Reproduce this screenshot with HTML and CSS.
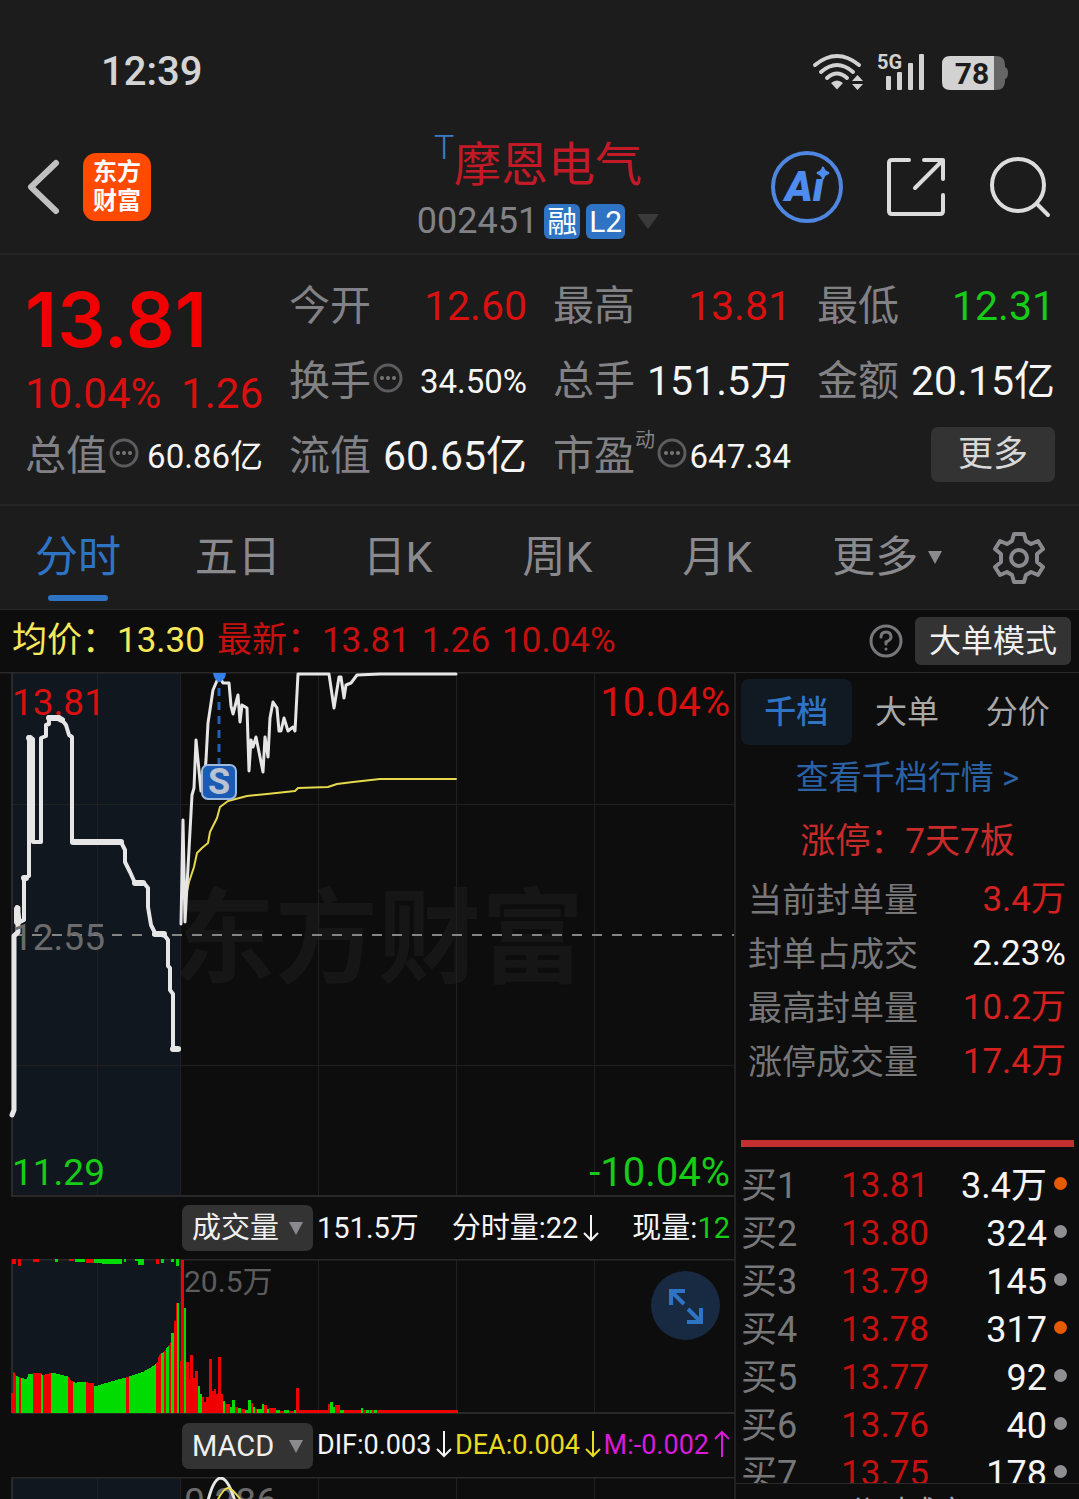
FILE: index.html
```html
<!DOCTYPE html>
<html lang="zh-CN">
<head>
    <meta charset="UTF-8">
    <meta name="viewport" content="width=device-width, initial-scale=1.0">
    <title>摩恩电气 002451</title>
    <link rel="stylesheet" href="styles.css">
</head>
<body>
<div class="screen">

    <!-- Status bar -->
    <div class="status">
        <span class="status__time">12:39</span>
        <svg class="status__icons" viewBox="812 42 196 60" width="196" height="60">
            <g fill="none" stroke="#d2d2d2" stroke-width="4" stroke-linecap="round">
                <path d="M815 65 Q837 47 859 65"/>
                <path d="M821 72 Q837 58 853 72"/>
                <path d="M827 78 Q837 69 847 78"/>
            </g>
            <g fill="#d2d2d2">
                <path d="M831 83 Q837 78 843 83 L837 89.500 Z"/>
                <path d="M852 81 L857.500 75 L863 81 Z M852 84 H863 L857.500 90 Z"/>
                <rect x="886" y="76" width="5" height="14" rx="1"/>
                <rect x="897" y="72" width="5" height="18" rx="1"/>
                <rect x="908" y="63" width="5" height="27" rx="1"/>
                <rect x="919" y="54" width="5" height="36" rx="1"/>
                <text class="status__net" x="877" y="69">5G</text>
            </g>
            <path d="M990 56 H996 Q1005 56 1005 65 V67 Q1008 68 1008 73 Q1008 78 1005 79 V81 Q1005 90 996 90 H990 Z" fill="#666"/>
            <path d="M950 56 H994 V90 H950 Q942 90 942 82 V64 Q942 56 950 56 Z" fill="#d2d2d2"/>
            <text class="status__battery" x="972" y="84" text-anchor="middle">78</text>
        </svg>
    </div>

    <!-- Title bar -->
    <header class="header">
        <div class="header__left">
            <button class="icon-btn" aria-label="返回">
                <svg width="36" height="56" viewBox="0 0 36 56"><path d="M31 4 L6 28 L31 52" fill="none" stroke="#c0c0c0" stroke-width="6" stroke-linecap="round" stroke-linejoin="round"/></svg>
            </button>
            <a href="#" class="header__logo">东方<br>财富</a>
        </div>
        <div class="header__title">
            <h1 class="header__name"><sup class="header__mark">T</sup>摩恩电气</h1>
            <div class="header__code">
                <span>002451</span>
                <span class="tag">融</span>
                <span class="tag">L2</span>
                <svg width="22" height="15" viewBox="0 0 22 15"><path d="M0 0 H22 L11 15 Z" fill="#3a3a3a"/></svg>
            </div>
        </div>
        <div class="header__right">
            <button class="icon-btn" aria-label="Ai">
                <svg width="72" height="72" viewBox="772 152 72 72">
                    <circle cx="808" cy="188" r="34" fill="none" stroke="#4f86e0" stroke-width="4"/>
                    <text class="header__ai" x="786" y="202">Ai</text>
                    <rect x="815" y="165" width="16" height="15" fill="#1c1c1c"/>
                    <path d="M824 168 Q825 173 830 174 Q825 175 824 180 Q823 175 818 174 Q823 173 824 168 Z" fill="#4f8cf0" stroke="#4f8cf0" stroke-width="2"/>
                </svg>
            </button>
            <button class="icon-btn" aria-label="分享">
                <svg width="60" height="60" viewBox="886 158 60 60" fill="none" stroke="#dcdcdc" stroke-width="4" stroke-linecap="round" stroke-linejoin="round">
                    <path d="M909 161 H892 Q889 161 889 164 V212 Q889 215 892 215 H940 Q943 215 943 212 V196"/>
                    <path d="M924 161 H943 V180 M942 162 L915 189"/>
                </svg>
            </button>
            <button class="icon-btn" aria-label="搜索">
                <svg width="62" height="62" viewBox="989 156 62 62" fill="none" stroke="#dcdcdc" stroke-width="4" stroke-linecap="round">
                    <circle cx="1018" cy="185" r="26"/>
                    <path d="M1037 204 L1048 215"/>
                </svg>
            </button>
        </div>
    </header>

    <!-- Quote -->
    <section class="quote">
        <div class="quote__price">
            <strong class="quote__last">13.81</strong>
            <div class="quote__change"><span>10.04%</span><span>1.26</span></div>
        </div>
        <div class="quote__item"><span class="quote__label">今开</span><span class="quote__value up">12.60</span></div>
        <div class="quote__item"><span class="quote__label">最高</span><span class="quote__value up">13.81</span></div>
        <div class="quote__item"><span class="quote__label">最低</span><span class="quote__value down">12.31</span></div>
        <div class="quote__item">
            <span class="quote__label">换手<svg class="dots" viewBox="0 0 30 30"><use href="#dots"/></svg></span>
            <span class="quote__value quote__value--small">34.50%</span>
        </div>
        <div class="quote__item"><span class="quote__label">总手</span><span class="quote__value">151.5万</span></div>
        <div class="quote__item"><span class="quote__label">金额</span><span class="quote__value">20.15亿</span></div>
        <div class="quote__item">
            <span class="quote__label">总值<svg class="dots" viewBox="0 0 30 30"><use href="#dots"/></svg></span>
            <span class="quote__value quote__value--small">60.86亿</span>
        </div>
        <div class="quote__item"><span class="quote__label">流值</span><span class="quote__value">60.65亿</span></div>
        <div class="quote__item">
            <span class="quote__label">市盈<small class="quote__note">动</small><svg class="dots" viewBox="0 0 30 30"><use href="#dots"/></svg></span>
            <span class="quote__value quote__value--small">647.34</span>
        </div>
        <div class="quote__item quote__item--end"><button class="quote__more">更多</button></div>
    </section>

    <svg class="defs" width="0" height="0">
        <symbol id="dots" viewBox="0 0 30 30">
            <circle cx="15" cy="15" r="13" fill="none" stroke="#5c5c5e" stroke-width="3"/>
            <g fill="#77777a"><circle cx="9" cy="15" r="2"/><circle cx="15" cy="15" r="2"/><circle cx="21" cy="15" r="2"/></g>
        </symbol>
    </svg>

    <!-- Period tabs -->
    <nav class="tabs">
        <a href="#" class="tabs__link tabs__link--active">分时</a>
        <a href="#" class="tabs__link">五日</a>
        <a href="#" class="tabs__link">日K</a>
        <a href="#" class="tabs__link">周K</a>
        <a href="#" class="tabs__link">月K</a>
        <a href="#" class="tabs__link tabs__link--more">更多<svg width="14" height="13" viewBox="0 0 14 13"><path d="M0 0 H14 L7 13 Z" fill="#8a8a8e"/></svg></a>
        <button class="icon-btn" aria-label="设置">
            <svg width="54" height="54" viewBox="-27 -27 54 54" fill="none" stroke="#8a8a8e" stroke-width="4" stroke-linejoin="round">
                <path d="M-5 -24 H5 L7 -17 L12 -14 L19 -17 L24 -9 L18 -4 V4 L24 9 L19 17 L12 14 L7 17 L5 24 H-5 L-7 17 L-12 14 L-19 17 L-24 9 L-18 4 V-4 L-24 -9 L-19 -17 L-12 -14 L-7 -17 Z"/>
                <circle r="8"/>
            </svg>
        </button>
    </nav>

    <!-- Average / latest -->
    <div class="info">
        <span class="info__avg">均价：13.30</span>
        <span class="info__last">最新：13.81</span>
        <span class="info__last">1.26</span>
        <span class="info__last">10.04%</span>
        <button class="icon-btn info__help" aria-label="帮助">
            <svg width="34" height="34" viewBox="0 0 34 34" fill="none" stroke="#77777a" stroke-width="3" stroke-linecap="round">
                <circle cx="17" cy="17" r="15"/>
                <path d="M12 13 Q12 8 17 8 Q22 8 22 13 Q22 16 17 18 V20 M17 25 V25.100"/>
            </svg>
        </button>
        <button class="info__mode">大单模式</button>
    </div>

    <main class="market">
        <!-- Charts -->
        <div class="charts">
            <svg class="chart" viewBox="0 672 734 525">
                <rect x="12" y="673" width="169" height="523" fill="#10171f"/>
                <text class="chart__watermark" x="172" y="975">东方财富</text>
                <g class="chart__grid">
                    <path d="M97.500 673 V1196 M180.500 673 V1196 M318.500 673 V1196 M456.500 673 V1196 M594.500 673 V1196"/>
                    <path d="M12 804.500 H734 M12 1065.500 H734"/>
                </g>
                <path class="chart__frame" d="M0 672.500 H734 M12 672 V1196 H734"/>
                <path d="M12 935 H734" stroke="#858585" stroke-width="2" stroke-dasharray="10 10"/>
                <path class="line" stroke-width="5" d="M12 1115 L14 1110 V936 L18 932 V908"/>
                <path class="line" stroke-width="4" d="M17 907 L20 922 L24 920 V878 L29 876 V737 L33 739 V842 H41 V738 L46 736 V725 L49 724 V717 H59 L62 720 L66 725 L69 735 L72 737 V842 H121 L125 850 V862 L130 872 L135 883 H144 L148 888 V907 L151 925 L155 933 L165 936 L168 940 V966 L170 968 V990 L173 994 V1049 H179"/>
                <path class="line" stroke-width="6" d="M49 718 H58 L62 720 M73 842 H121 M135 883 H143 M155 934 H164 M173 1049 H178 M29 738 H30 M24 878 H26 M17 909 V922"/>
                <path class="line line--avg" d="M185 900 L189 882 L194 867 L197 853 L202 848 L208 843 L210 832 L217 818 L220 807 L228 801 L247 796 L267 794 L295 791 L298 788 L328 787 L337 784 L353 782 L380 779 L456 779"/>
                <path class="line" stroke-width="3" d="M181 924 L183 820 L185 922 L192 795 L194 788 L196 740 L201 791 L204 782 L206 760 L208 723 L213 690 L219 676 L223 683 L229 683 L231 706 L233 714 L238 695 L240 722 L242 705 L247 708 L249 771 L251 740 L253 747 L256 737 L263 772 L265 737 L268 757 L270 718 L273 702 L277 708 L279 731 H281 L284 718 L288 731 L293 727 L295 731 L298 674 H329 L334 708 L339 677 H341 L344 698 L346 685 L351 683 L357 675 L380 674 H456"/>
                <path d="M219 674 V764" stroke="#2461b5" stroke-width="3" stroke-dasharray="8 6"/>
                <path d="M213 673 H226 Q225 681 219 682 Q214 680 213 673 Z" fill="#3580ea"/>
                <rect x="202" y="765" width="34" height="34" rx="6" fill="#1c5bb4" stroke="#9db9df" stroke-width="2"/>
                <text class="chart__trade" x="219" y="794" text-anchor="middle">S</text>
                <text class="chart__label up" x="12" y="715">13.81</text>
                <text class="chart__label chart__label--percent up" x="730" y="716" text-anchor="end">10.04%</text>
                <text class="chart__label chart__label--mid" x="12" y="950">12.55</text>
                <text class="chart__label down" x="12" y="1185">11.29</text>
                <text class="chart__label chart__label--percent down" x="730" y="1186" text-anchor="end">-10.04%</text>
            </svg>

            <div class="indicator">
                <label class="picker">
                    <select class="picker__select" aria-label="指标"><option>成交量</option></select>
                    <svg class="picker__caret" width="14" height="13" viewBox="0 0 14 13"><path d="M0 0 H14 L7 13 Z"/></svg>
                </label>
                <div class="indicator__values">
                    <span>151.5万</span>
                    <span>分时量:22<svg class="arrow" viewBox="0 0 16 30"><path d="M8 2 V27 M1 20 L8 27 L15 20"/></svg></span>
                    <span>现量:<span class="down">12</span></span>
                </div>
            </div>

            <div class="volume">
                <svg class="chart" viewBox="0 69 734 155">
                    <rect x="12" y="69" width="169" height="154" fill="#10171f"/>
                    <path class="chart__grid" d="M97.500 69 V223 M180.500 69 V223 M318.500 69 V223 M456.500 69 V223 M594.500 69 V223"/>
                    <path class="chart__frame" d="M12 223 V69.500 H734 M12 223 H734"/>
                    <g id="bars" transform="scale(0.3333)" shape-rendering="crispEdges"></g>
                    <text class="chart__small" x="184" y="102">20.5万</text>
                </svg>
                <button class="volume__expand" aria-label="全屏">
                    <svg width="36" height="36" viewBox="0 0 36 36" fill="none" stroke="#2f74c4" stroke-width="4"><path d="M3 17 V3 H17 M4 4 L16 16 M33 20 V34 H19 M32 33 L20 21"/></svg>
                </button>
            </div>

            <div class="indicator indicator--macd">
                <label class="picker">
                    <select class="picker__select" aria-label="指标"><option>MACD</option></select>
                    <svg class="picker__caret" width="14" height="13" viewBox="0 0 14 13"><path d="M0 0 H14 L7 13 Z"/></svg>
                </label>
                <div class="indicator__values">
                    <span>DIF:0.003<svg class="arrow" viewBox="0 0 16 30"><path d="M8 2 V27 M1 20 L8 27 L15 20"/></svg></span>
                    <span class="dea">DEA:0.004<svg class="arrow" viewBox="0 0 16 30"><path d="M8 2 V27 M1 20 L8 27 L15 20"/></svg></span>
                    <span class="macd">M:-0.002<svg class="arrow" viewBox="0 0 16 30"><path d="M8 28 V3 M1 10 L8 3 L15 10"/></svg></span>
                </div>
            </div>

            <svg class="chart" viewBox="0 1477 734 100">
                <rect x="12" y="1477" width="169" height="100" fill="#10171f"/>
                <path class="chart__grid" d="M97.500 1477 V1577 M180.500 1477 V1577 M318.500 1477 V1577 M456.500 1477 V1577 M594.500 1477 V1577"/>
                <path class="chart__frame" d="M12 1577 V1477.500 H734"/>
                <text class="chart__label chart__label--mid" x="184" y="1514">0.286</text>
                <path class="line" stroke-width="3" d="M207 1505 Q213 1478 221 1478 Q229 1479 236 1505"/>
                <path class="line line--avg" d="M214 1507 Q223 1488 228 1488 Q232 1488 240 1499"/>
            </svg>
        </div>

        <!-- Order book -->
        <aside class="depth">
            <nav class="depth__tabs">
                <a href="#" class="depth__tab depth__tab--active">千档</a>
                <a href="#" class="depth__tab">大单</a>
                <a href="#" class="depth__tab">分价</a>
            </nav>
            <a href="#" class="depth__link">查看千档行情 &gt;</a>
            <p class="depth__limit">涨停：7天7板</p>
            <dl class="stats">
                <div class="stats__row"><dt>当前封单量</dt><dd class="red">3.4万</dd></div>
                <div class="stats__row"><dt>封单占成交</dt><dd>2.23%</dd></div>
                <div class="stats__row"><dt>最高封单量</dt><dd class="red">10.2万</dd></div>
                <div class="stats__row"><dt>涨停成交量</dt><dd class="red">17.4万</dd></div>
            </dl>
            <div class="book">
                <table class="book__table">
                    <tr><th>买1</th><td class="book__price">13.81</td><td>3.4万</td><td class="book__dot book__dot--hot"></td></tr>
                    <tr><th>买2</th><td class="book__price">13.80</td><td>324</td><td class="book__dot"></td></tr>
                    <tr><th>买3</th><td class="book__price">13.79</td><td>145</td><td class="book__dot"></td></tr>
                    <tr><th>买4</th><td class="book__price">13.78</td><td>317</td><td class="book__dot book__dot--hot"></td></tr>
                    <tr><th>买5</th><td class="book__price">13.77</td><td>92</td><td class="book__dot"></td></tr>
                    <tr><th>买6</th><td class="book__price">13.76</td><td>40</td><td class="book__dot"></td></tr>
                    <tr><th>买7</th><td class="book__price">13.75</td><td>178</td><td class="book__dot"></td></tr>
                </table>
            </div>
            <div class="depth__deals">分时成交</div>
        </aside>
    </main>
</div>

<script>
    const RED = '#f00000';
    const GREEN = '#00dc00';
    const BASE = 670;
    const TOP = 207;
    const bars = document.getElementById('bars');

    function addBar(x, y, width, height, color) {
        const rect = document.createElementNS('http://www.w3.org/2000/svg', 'rect');
        rect.setAttribute('x', x);
        rect.setAttribute('y', y);
        rect.setAttribute('width', width);
        rect.setAttribute('height', height);
        rect.setAttribute('fill', color);
        bars.appendChild(rect);
    }

    // outline of the call auction volume: x, top
    const outline = [[33, 610], [38, 610], [40, 545], [48, 557], [60, 563], [80, 567], [85, 552], [120, 548],
        [128, 555], [150, 550], [165, 550], [205, 560], [213, 572], [225, 578], [250, 576], [281, 580],
        [284, 590], [330, 575], [380, 562], [430, 545], [464, 525], [472, 515], [476, 495], [487, 488],
        [497, 478], [505, 468], [512, 458], [514, 430], [521, 428], [522, 392], [528, 392], [529, 338], [537, 338]];
    // red stretches of the auction, the rest is green
    const redParts = [[33, 47], [55, 61], [99, 121], [129, 152], [204, 217], [257, 282], [378, 386],
        [468, 482], [490, 497], [505, 513], [521, 529]];

    function outlineAt(x) {
        let i = 1;
        while (i < outline.length - 1 && outline[i][0] < x) i++;
        const [x0, y0] = outline[i - 1];
        const [x1, y1] = outline[i];
        return y0 + (y1 - y0) * (x - x0) / (x1 - x0);
    }

    for (let x = 33; x < 537; x += 3) {
        const red = redParts.some(([a, b]) => x >= a && x < b);
        const y = outlineAt(x + 1);
        addBar(x, y, 3, BASE - y, red ? RED : GREEN);
    }

    // trading minutes: x, width, top, colour
    [[539, 6, 512, 'r'], [544, 8, 210, 'r'], [552, 7, 355, 'g'], [559, 7, 517, 'r'], [566, 5, 567, 'r'],
     [571, 9, 495, 'r'], [580, 6, 565, 'r'], [586, 7, 542, 'r'], [593, 7, 587, 'g'], [600, 7, 613, 'g'],
     [607, 6, 620, 'r'], [613, 6, 637, 'r'], [619, 7, 620, 'r'], [626, 9, 508, 'r'], [635, 6, 603, 'r'],
     [641, 7, 598, 'r'], [648, 6, 612, 'r'], [654, 9, 500, 'r'], [663, 6, 612, 'r'], [669, 7, 632, 'g'],
     [676, 14, 642, 'r'], [690, 6, 650, 'g'], [696, 8, 630, 'g'], [704, 10, 652, 'r'], [714, 8, 655, 'g'],
     [722, 14, 656, 'r'], [736, 8, 661, 'g'], [744, 8, 630, 'g'], [752, 7, 638, 'r'], [759, 6, 650, 'g'],
     [765, 6, 656, 'r'], [771, 14, 657, 'g'], [785, 8, 643, 'g'], [793, 8, 646, 'r'], [801, 6, 656, 'g'],
     [807, 20, 653, 'r'], [827, 12, 661, 'g'], [839, 14, 662, 'r'], [853, 14, 661, 'g'], [867, 14, 662, 'r'],
     [881, 7, 660, 'g'], [888, 10, 593, 'r'], [898, 87, 660, 'r'], [985, 6, 643, 'r'], [991, 9, 637, 'g'],
     [1000, 5, 652, 'g'], [1005, 15, 646, 'r'], [1020, 13, 660, 'g'], [1033, 49, 660, 'r'], [1082, 8, 655, 'g'],
     [1090, 8, 661, 'r'], [1098, 8, 659, 'g'], [1106, 4, 660, 'r'], [1110, 7, 660, 'g'], [1117, 6, 660, 'r'],
     [1123, 8, 660, 'g'], [1131, 242, 660, 'r']
    ].forEach(([x, w, y, c]) => addBar(x, y, w, BASE - y, c === 'r' ? RED : GREEN));

    // unmatched volume, hanging from the top
    [[35, 12, 222, 'r'], [55, 8, 228, 'r'], [100, 17, 215, 'r'], [165, 10, 215, 'g'], [208, 14, 212, 'r'],
     [225, 30, 215, 'g'], [257, 24, 219, 'r'], [281, 24, 219, 'g'], [305, 60, 223, 'g'], [371, 8, 217, 'g'],
     [405, 10, 213, 'g'], [415, 17, 226, 'g'], [468, 9, 223, 'r'], [484, 7, 219, 'g'], [514, 8, 215, 'g'],
     [528, 9, 228, 'g']
    ].forEach(([x, w, y, c]) => addBar(x, TOP, w, y - TOP, c === 'r' ? RED : GREEN));
</script>
</body>
</html>
```
FILE: styles.css
```css
* {
    box-sizing: border-box;
}

body {
    margin: 0;
    background-color: #0d0d0d;
    color: #f5f5f5;
    font-family: Roboto, "Noto Sans CJK SC", sans-serif;
    line-height: 1.2;
}

a {
    color: inherit;
    text-decoration: none;
}

button {
    border: none;
    padding: 0;
    color: inherit;
    font-family: inherit;
    line-height: inherit;
    cursor: pointer;
}

svg {
    display: block;
}

.screen {
    display: flex;
    flex-direction: column;
    height: 100vh;
    overflow: hidden;
}

.defs {
    position: absolute;
}

.icon-btn {
    display: flex;
    justify-content: center;
    align-items: center;
    background: none;
}

.up {
    color: #d9100f;
    fill: #d9100f;
}

.down {
    color: #16cc16;
    fill: #16cc16;
}

.red {
    color: #d4201f;
}

/* Status bar */
.status {
    display: flex;
    justify-content: space-between;
    align-items: center;
    flex: none;
    height: 121px;
    padding: 23px 71px 0 101px;
    background-color: #1c1c1c;
}

.status__time {
    font-size: 40px;
    font-weight: 500;
    color: #d4d4d4;
}

.status__net {
    font-size: 20px;
    font-weight: 700;
}

.status__battery {
    font-size: 30px;
    font-weight: 700;
    fill: #1c1c1c;
}

/* Title bar */
.header {
    display: grid;
    grid-template-columns: 1fr auto 1fr;
    align-items: center;
    flex: none;
    height: 134px;
    padding: 0 28px 0 25px;
    background-color: #1c1c1c;
    border-bottom: 2px solid #262626;
}

.header__left {
    display: flex;
    align-items: center;
    gap: 22px;
}

.header__logo {
    width: 68px;
    height: 68px;
    padding-top: 5px;
    border-radius: 13px;
    background-color: #ff4a00;
    color: #fff;
    font-size: 24px;
    font-weight: 700;
    line-height: 29px;
    text-align: center;
}

.header__title {
    padding-top: 11px;
    text-align: center;
}

.header__name {
    position: relative;
    display: inline-block;
    margin: 0;
    padding-left: 20px;
    color: #c21a26;
    font-size: 47px;
    font-weight: 400;
    line-height: 58px;
}

.header__mark {
    position: absolute;
    top: -18px;
    left: 0;
    color: #3a7cc8;
    font-size: 34px;
    font-weight: 300;
    line-height: 58px;
}

.header__code {
    display: flex;
    align-items: center;
    gap: 6px;
    height: 56px;
    color: #828286;
    font-size: 36px;
}

.header__code svg {
    margin-left: 6px;
}

.tag {
    padding: 0 3px;
    border-radius: 6px;
    background-color: #2f74c4;
    color: #fff;
    font-size: 30px;
    line-height: 35px;
}

.header__right {
    display: flex;
    justify-content: flex-end;
    align-items: center;
    gap: 43px;
}

.header__ai {
    fill: #4f8cf0;
    font-size: 42px;
    font-weight: 900;
    font-style: italic;
}

/* Quote */
.quote {
    display: grid;
    grid-template-columns: repeat(4, 1fr);
    grid-auto-rows: 75px;
    column-gap: 26px;
    flex: none;
    padding: 14px 24px 10px 25px;
    background-color: #1c1c1c;
    border-bottom: 2px solid #262626;
}

.quote__price {
    grid-row: span 2;
}

.quote__last {
    display: block;
    padding-top: 8px;
    color: #f00000;
    font-family: Inter, Roboto, sans-serif;
    font-size: 76px;
    font-weight: 600;
    line-height: 84px;
}

.quote__change {
    display: flex;
    justify-content: space-between;
    color: #d9100f;
    font-size: 42px;
    line-height: 66px;
}

.quote__item {
    display: flex;
    justify-content: space-between;
    align-items: center;
    white-space: nowrap;
}

.quote__item--end {
    justify-content: flex-end;
}

.quote__label {
    display: flex;
    align-items: center;
    color: #828286;
    font-size: 41px;
}

.quote__value {
    font-size: 41px;
}

.quote__value--small {
    font-size: 33px;
}

.quote__note {
    align-self: flex-start;
    font-size: 20px;
    line-height: 16px;
}

.dots {
    width: 30px;
    height: 30px;
    margin: 0 0 8px 2px;
}

.quote__more {
    width: 124px;
    height: 55px;
    margin-bottom: 4px;
    border-radius: 7px;
    background-color: #333;
    color: #d8d8d8;
    font-size: 35px;
}

/* Period tabs */
.tabs {
    display: grid;
    grid-template-columns: repeat(6, 4fr) 3fr;
    flex: none;
    height: 104px;
    background-color: #1c1c1c;
    border-bottom: 1px solid #262626;
}

.tabs__link {
    position: relative;
    display: flex;
    justify-content: center;
    align-items: center;
    gap: 10px;
    padding-right: 4px;
    color: #8a8a8e;
    font-size: 43px;
}

.tabs__link--active {
    color: #2f74c4;
}

.tabs__link--active::after {
    content: "";
    position: absolute;
    bottom: 8px;
    width: 60px;
    height: 6px;
    border-radius: 3px;
    background-color: #2f74c4;
}

.tabs__link--more {
    padding-left: 20px;
}

/* Average / latest */
.info {
    display: flex;
    align-items: center;
    gap: 12px;
    flex: none;
    height: 62px;
    padding: 0 8px 0 12px;
    font-size: 35px;
}

.info__avg {
    color: #f7e85a;
}

.info__last {
    color: #c5100f;
}

.info__help {
    margin-left: auto;
}

.info__mode {
    width: 156px;
    height: 48px;
    border-radius: 6px;
    background-color: #333;
    color: #f0f0f0;
    font-size: 32px;
}

/* Charts */
.market {
    display: grid;
    grid-template-columns: 734fr 345fr;
    flex: 1;
    min-height: 0;
}

.charts {
    min-width: 0;
    overflow: hidden;
}

.chart {
    width: 100%;
}

.chart__grid {
    fill: none;
    stroke: #1e2022;
    stroke-width: 1;
}

.chart__frame {
    fill: none;
    stroke: #292929;
    stroke-width: 2;
}

.chart__watermark {
    fill: #161616;
    font-size: 103px;
    font-weight: 700;
}

.chart__label {
    font-size: 37px;
}

.chart__label--percent {
    font-size: 40px;
}

.chart__label--mid {
    fill: #6b6b6b;
}

.chart__small {
    fill: #5c5c5c;
    font-size: 30px;
}

.chart__trade {
    fill: #b9c3d2;
    font-size: 36px;
    font-weight: 700;
}

.line {
    fill: none;
    stroke: #e6e6e6;
    stroke-linecap: round;
    stroke-linejoin: round;
}

.line--avg {
    stroke: #e6d94c;
    stroke-width: 2;
}

.indicator {
    display: flex;
    align-items: center;
    gap: 4px;
    height: 62px;
    padding: 0 4px 0 182px;
    font-size: 29px;
    white-space: nowrap;
}

.indicator--macd {
    height: 63px;
    font-size: 27px;
}

.indicator__values {
    display: flex;
    justify-content: space-between;
    flex: 1;
}

.picker {
    position: relative;
    flex: none;
    width: 131px;
    height: 46px;
}

.picker__select {
    width: 100%;
    height: 100%;
    padding: 0 10px;
    border: none;
    border-radius: 7px;
    appearance: none;
    background-color: #333;
    color: #f0f0f0;
    font-family: inherit;
    font-size: 29px;
}

.picker__caret {
    position: absolute;
    top: 17px;
    right: 10px;
    fill: #8a8a8e;
    pointer-events: none;
}

.arrow {
    display: inline-block;
    width: 16px;
    height: 30px;
    margin-left: 5px;
    vertical-align: -5px;
    fill: none;
    stroke: currentColor;
    stroke-width: 2;
}

.dea {
    color: #e8dc20;
}

.macd {
    color: #d81bd8;
}

.volume {
    position: relative;
}

.volume__expand {
    position: absolute;
    top: 12px;
    right: 14px;
    display: flex;
    justify-content: center;
    align-items: center;
    width: 69px;
    height: 69px;
    border-radius: 50%;
    background-color: #182a42;
}

/* Order book */
.depth {
    display: flex;
    flex-direction: column;
    min-width: 0;
    min-height: 0;
    border-left: 2px solid #222;
    border-top: 1px solid #292929;
}

.depth__tabs {
    display: grid;
    grid-template-columns: repeat(3, 1fr);
    padding: 6px 6px 0 5px;
    color: #a8a8a8;
    font-size: 32px;
    line-height: 66px;
    text-align: center;
}

.depth__tab--active {
    border-radius: 8px;
    background-color: #111922;
    color: #2f74c4;
    font-weight: 500;
}

.depth__link {
    color: #2a62a5;
    font-size: 33px;
    line-height: 66px;
    text-align: center;
}

.depth__limit {
    margin: 0;
    color: #c92a2a;
    font-size: 35px;
    line-height: 62px;
    text-align: center;
}

.stats {
    margin: 0;
    padding: 0 13px 51px 12px;
}

.stats__row {
    display: flex;
    justify-content: space-between;
    font-size: 34px;
    line-height: 54px;
}

.stats dt {
    color: #77777a;
}

.stats dd {
    margin: 0;
    font-size: 35px;
}

.book {
    flex: 1;
    min-height: 0;
    overflow: hidden;
    margin: 0 5px;
    padding-top: 15px;
    border-top: 7px solid #c43030;
}

.book__table {
    width: 100%;
    border-collapse: collapse;
    font-size: 36px;
    line-height: 48px;
    text-align: right;
}

.book__table th,
.book__table td {
    padding: 0;
}

.book__table th {
    width: 70px;
    color: #77777a;
    font-weight: 400;
    text-align: left;
}

.book__table .book__price {
    width: 118px;
    color: #c5100f;
    font-size: 35px;
}

.book__table .book__dot {
    width: 27px;
    padding: 0 7px 6px 0;
    vertical-align: middle;
}

.book__dot::before {
    content: "";
    float: right;
    width: 13px;
    height: 13px;
    border-radius: 50%;
    background-color: #8e8e93;
}

.book__dot--hot::before {
    background-color: #e85a00;
}

.depth__deals {
    flex: none;
    height: 16px;
    overflow: hidden;
    border-top: 1px solid #292929;
    color: #a8a8a8;
    font-size: 30px;
    line-height: 56px;
    text-align: center;
}
```
